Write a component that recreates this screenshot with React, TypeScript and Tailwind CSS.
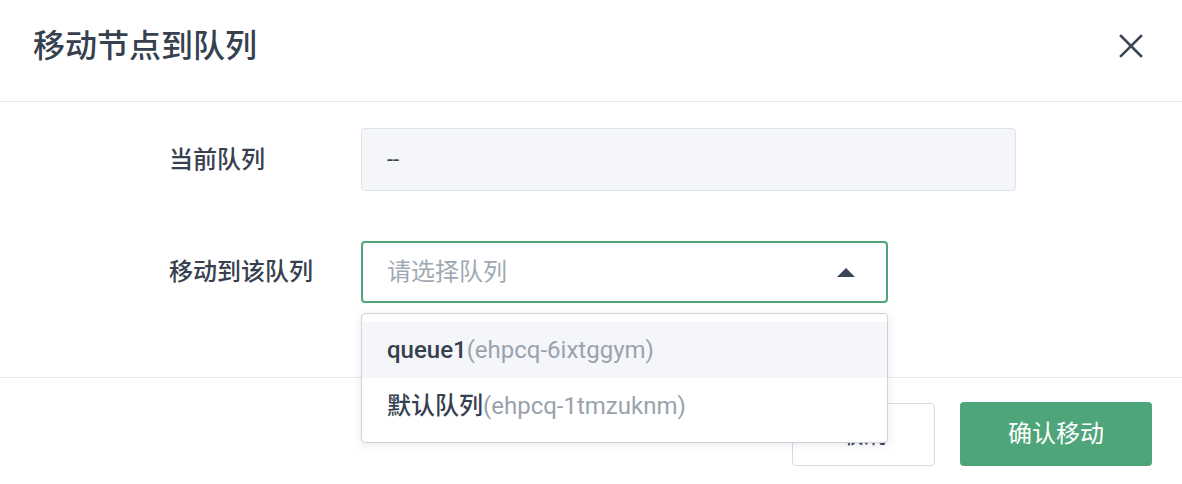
import React from "react";

export default function App() {
  return (
    <div
      className="relative h-[484px] w-[1182px] overflow-hidden bg-white text-[#36404f]"
      style={{ fontFamily: 'Roboto, "Noto Sans CJK SC", "Noto Sans", sans-serif' }}
    >
      {/* Header */}
      <div className="flex h-[102px] items-center justify-between border-b border-[#e3e8ee] pb-[10px] pl-[33px] pr-[39px]">
        <div className="text-[32px] font-medium leading-none text-[#36404f]">移动节点到队列</div>
        <button className="flex h-[24px] w-[24px] items-center justify-center">
          <svg width="24" height="24" viewBox="0 0 24 24" fill="none">
            <path d="M2 2L22 22M22 2L2 22" stroke="#3a4555" strokeWidth="2.6" strokeLinecap="square" />
          </svg>
        </button>
      </div>

      {/* Body */}
      <div className="h-[275px] pt-[26px]">
        <div className="flex items-center">
          <div className="w-[361px] pl-[169px] text-[24px] font-medium leading-none">当前队列</div>
          <div className="flex h-[63px] w-[655px] items-center rounded border border-[#dde3eb] bg-[#f4f6fa] px-[25px] text-[22px] text-[#36404f]">
            --
          </div>
        </div>
        <div className="mt-[50px] flex items-center">
          <div className="w-[361px] pl-[169px] text-[24px] font-medium leading-none">移动到该队列</div>
          <div className="relative w-[527px]">
            <div className="flex h-[62px] w-full items-center justify-between rounded border-2 border-[#4ea579] bg-white pl-[24px] pr-[31px]">
              <span className="text-[24px] text-[#a0a8b3]">请选择队列</span>
              <svg width="18" height="9" viewBox="0 0 18 9">
                <path d="M0 9L9 0L18 9Z" fill="#3a4555" />
              </svg>
            </div>
            <div className="absolute left-0 top-[72px] z-10 w-full rounded border border-[#ccd3dd] bg-white py-[8px] shadow-[0_2px_8px_rgba(30,40,60,0.10)]">
              <div className="flex h-[56px] items-center bg-[#f4f6fa] px-[25px] text-[24px]">
                <span className="font-medium text-[#36404f]">queue1</span>
                <span className="text-[#9aa2ae]">(ehpcq-6ixtggym)</span>
              </div>
              <div className="flex h-[56px] items-center px-[25px] text-[24px]">
                <span className="font-medium text-[#36404f]">默认队列</span>
                <span className="text-[#9aa2ae]">(ehpcq-1tmzuknm)</span>
              </div>
            </div>
          </div>
        </div>
      </div>

      {/* Footer */}
      <div className="flex items-start justify-end gap-[25px] border-t border-[#e3e8ee] pr-[30px] pt-[24px]">
        <button className="mt-[1px] flex h-[63px] w-[143px] items-center justify-center rounded border border-[#d5dce5] bg-white text-[24px] text-[#36404f]">
          取消
        </button>
        <button className="flex h-[64px] w-[192px] items-center justify-center rounded bg-[#4ea579] text-[24px] text-white">
          确认移动
        </button>
      </div>
    </div>
  );
}
